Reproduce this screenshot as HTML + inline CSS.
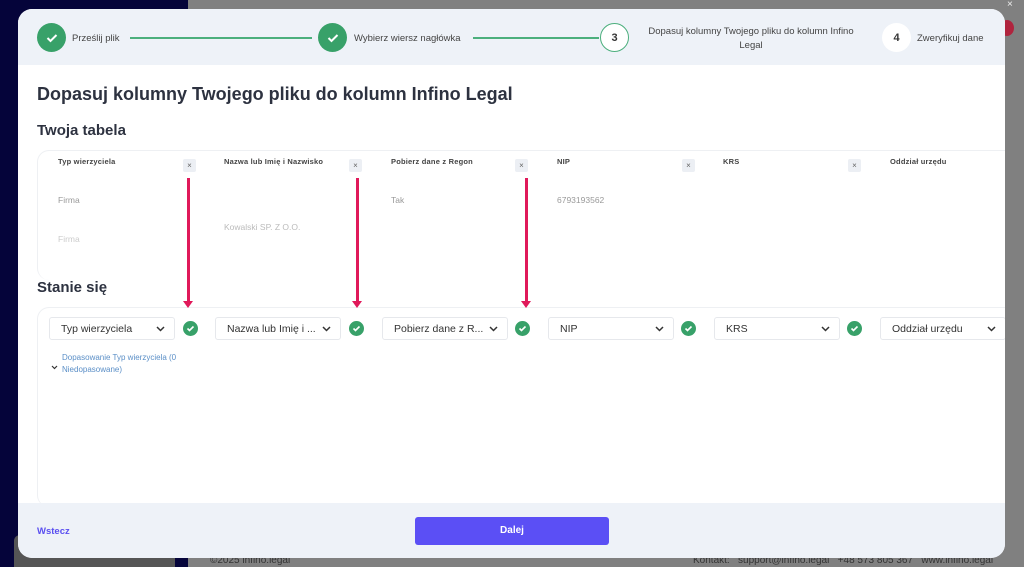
<!DOCTYPE html>
<html style="overflow:hidden"><head><meta charset="utf-8"><style>
*{box-sizing:border-box;margin:0;padding:0}
body{width:1024px;height:567px;overflow:hidden;position:relative;font-family:"Liberation Sans",sans-serif;background:#808080}
.navy{position:absolute;left:0;top:0;width:188px;height:567px;background:#05043a}
.modal{position:absolute;left:18px;top:9px;width:987px;height:549px;background:#fff;border-radius:14px;overflow:hidden}
.hdr{position:absolute;left:0;top:0;width:987px;height:56px;background:#eef2f8}
.ftr{position:absolute;left:0;top:494px;width:987px;height:55px;background:#eef2f8}
.circ{position:absolute;width:29px;height:29px;border-radius:50%;top:14px;display:flex;align-items:center;justify-content:center;font-size:11px;font-weight:bold;color:#333}
.done{background:#38a169}
.ab{position:absolute;font-size:9.5px;color:#444}
.line{position:absolute;height:2px;background:#4caf7d;top:28px}
h1{position:absolute;left:19px;top:75px;font-size:18px;font-weight:bold;color:#2d3240}
h2{position:absolute;font-size:15px;font-weight:bold;color:#2d3240;left:19px}
.card{position:absolute;left:19px;width:990px;border:1px solid #eef0f3;border-radius:12px}
.th{position:absolute;top:148px;font-size:7.5px;font-weight:bold;color:#444;letter-spacing:.2px}
.x{position:absolute;top:150px;width:13px;height:13px;background:#eceff4;border-radius:2px;font-size:8px;color:#666;text-align:center;line-height:13px}
.td{position:absolute;font-size:8.5px;color:#999}
.arrow{position:absolute;top:169px;width:3px;height:124px;background:#e0195a}
.arrow:after{content:"";position:absolute;left:-4px;bottom:-6px;border:5.5px solid transparent;border-top:7px solid #e0195a;border-bottom:0}
.sel{position:absolute;top:308px;width:126px;height:23px;border:1px solid #e6e8ec;border-radius:3px;font-size:10.5px;color:#333;padding:5px 0 0 11px}
.sel svg{position:absolute;right:9px;top:8px}
.ok{position:absolute;top:312px;width:15px;height:15px;border-radius:50%;background:#38a169}
.ok svg,.done svg{display:block}
.bot{position:absolute;top:555px;font-size:10px;line-height:12px;color:#333}
</style></head><body>
<div class="navy"></div>
<div style="position:absolute;left:14px;top:535px;width:161px;height:32px;background:#555;border-radius:6px 6px 0 0"></div>
<div class="bot" style="left:210px">©2025 infino.legal</div>
<div class="bot" style="left:693px">Kontakt: &nbsp; support@infino.legal &nbsp; +48 573 805 367 &nbsp; www.infino.legal</div>
<div style="position:absolute;left:1000px;top:20px;width:14px;height:16px;border-radius:50%;background:#b0243e"></div>
<div style="position:absolute;left:1007px;top:0;font-size:10px;line-height:10px;color:#eee">×</div>
<div class="modal">
 <div class="hdr"></div>
 <div class="circ done" style="left:19px"><svg width="12" height="10" viewBox="0 0 12 10"><path d="M1.5 5l3 3 6-6" stroke="#fff" stroke-width="2" fill="none"/></svg></div>
 <div class="ab" style="left:54px;top:24px">Prześlij plik</div>
 <div class="line" style="left:112px;width:182px"></div>
 <div class="circ done" style="left:300px"><svg width="12" height="10" viewBox="0 0 12 10"><path d="M1.5 5l3 3 6-6" stroke="#fff" stroke-width="2" fill="none"/></svg></div>
 <div class="ab" style="left:336px;top:24px">Wybierz wiersz nagłówka</div>
 <div class="line" style="left:455px;width:126px"></div>
 <div class="circ" style="left:582px;border:1.5px solid #4caf7d;background:#fff;color:#333">3</div>
 <div class="ab" style="left:620px;top:16px;width:226px;text-align:center;line-height:14px">Dopasuj kolumny Twojego pliku do kolumn Infino<br>Legal</div>
 <div class="circ" style="left:864px;background:#fff">4</div>
 <div class="ab" style="left:899px;top:24px">Zweryfikuj dane</div>

 <h1>Dopasuj kolumny Twojego pliku do kolumn Infino Legal</h1>
 <h2 style="top:113px">Twoja tabela</h2>
 <div class="card" style="top:141px;height:130px;border-bottom:none"></div>
 <h2 style="top:270px">Stanie się</h2>
 <div class="card" style="top:298px;height:200px;border-bottom:none"></div>

 <div class="th" style="left:40px">Typ wierzyciela</div>
 <div class="th" style="left:206px">Nazwa lub Imię i Nazwisko</div>
 <div class="th" style="left:373px">Pobierz dane z Regon</div>
 <div class="th" style="left:539px">NIP</div>
 <div class="th" style="left:705px">KRS</div>
 <div class="th" style="left:872px">Oddział urzędu</div>
 <div class="x" style="left:165px">×</div><div class="x" style="left:331px">×</div><div class="x" style="left:497px">×</div><div class="x" style="left:664px">×</div><div class="x" style="left:830px">×</div>
 <div class="td" style="left:40px;top:186px">Firma</div>
 <div class="td" style="left:40px;top:225px;color:#ccc">Firma</div>
 <div class="td" style="left:206px;top:213px;color:#bbb">Kowalski SP. Z O.O.</div>
 <div class="td" style="left:373px;top:186px">Tak</div>
 <div class="td" style="left:539px;top:186px">6793193562</div>
 <div class="arrow" style="left:169px"></div><div class="arrow" style="left:338px"></div><div class="arrow" style="left:507px"></div>

 <div class="sel" style="left:31px">Typ wierzyciela<svg width="9" height="6"><path d="M1 1l3.5 3.5L8 1" stroke="#333" stroke-width="1.5" fill="none"/></svg></div>
 <div class="sel" style="left:197px">Nazwa lub Imię i ...<svg width="9" height="6"><path d="M1 1l3.5 3.5L8 1" stroke="#333" stroke-width="1.5" fill="none"/></svg></div>
 <div class="sel" style="left:364px">Pobierz dane z R...<svg width="9" height="6"><path d="M1 1l3.5 3.5L8 1" stroke="#333" stroke-width="1.5" fill="none"/></svg></div>
 <div class="sel" style="left:530px">NIP<svg width="9" height="6"><path d="M1 1l3.5 3.5L8 1" stroke="#333" stroke-width="1.5" fill="none"/></svg></div>
 <div class="sel" style="left:696px">KRS<svg width="9" height="6"><path d="M1 1l3.5 3.5L8 1" stroke="#333" stroke-width="1.5" fill="none"/></svg></div>
 <div class="sel" style="left:862px">Oddział urzędu<svg width="9" height="6"><path d="M1 1l3.5 3.5L8 1" stroke="#333" stroke-width="1.5" fill="none"/></svg></div>
 <div class="ok" style="left:165px"><svg width="15" height="15"><path d="M4.5 7.5l2 2 4-4" stroke="#fff" stroke-width="1.6" fill="none"/></svg></div>
 <div class="ok" style="left:331px"><svg width="15" height="15"><path d="M4.5 7.5l2 2 4-4" stroke="#fff" stroke-width="1.6" fill="none"/></svg></div>
 <div class="ok" style="left:497px"><svg width="15" height="15"><path d="M4.5 7.5l2 2 4-4" stroke="#fff" stroke-width="1.6" fill="none"/></svg></div>
 <div class="ok" style="left:663px"><svg width="15" height="15"><path d="M4.5 7.5l2 2 4-4" stroke="#fff" stroke-width="1.6" fill="none"/></svg></div>
 <div class="ok" style="left:829px"><svg width="15" height="15"><path d="M4.5 7.5l2 2 4-4" stroke="#fff" stroke-width="1.6" fill="none"/></svg></div>
 <svg style="position:absolute;left:33px;top:356px" width="7" height="5"><path d="M1 1l2.5 2.5L6 1" stroke="#333" stroke-width="1.2" fill="none"/></svg>
 <div style="position:absolute;left:44px;top:343px;font-size:8px;line-height:11.5px;color:#5b8fc7">Dopasowanie Typ wierzyciela (0<br>Niedopasowane)</div>

 <div class="ftr"></div>
 <div style="position:absolute;left:19px;top:517px;font-size:9.5px;font-weight:bold;color:#5a4ff0">Wstecz</div>
 <div style="position:absolute;left:397px;top:508px;width:194px;height:28px;background:#5b4ff5;border-radius:3px;color:#fff;font-size:10px;font-weight:bold;text-align:center;line-height:28px">Dalej</div>
</div>
</body></html>
